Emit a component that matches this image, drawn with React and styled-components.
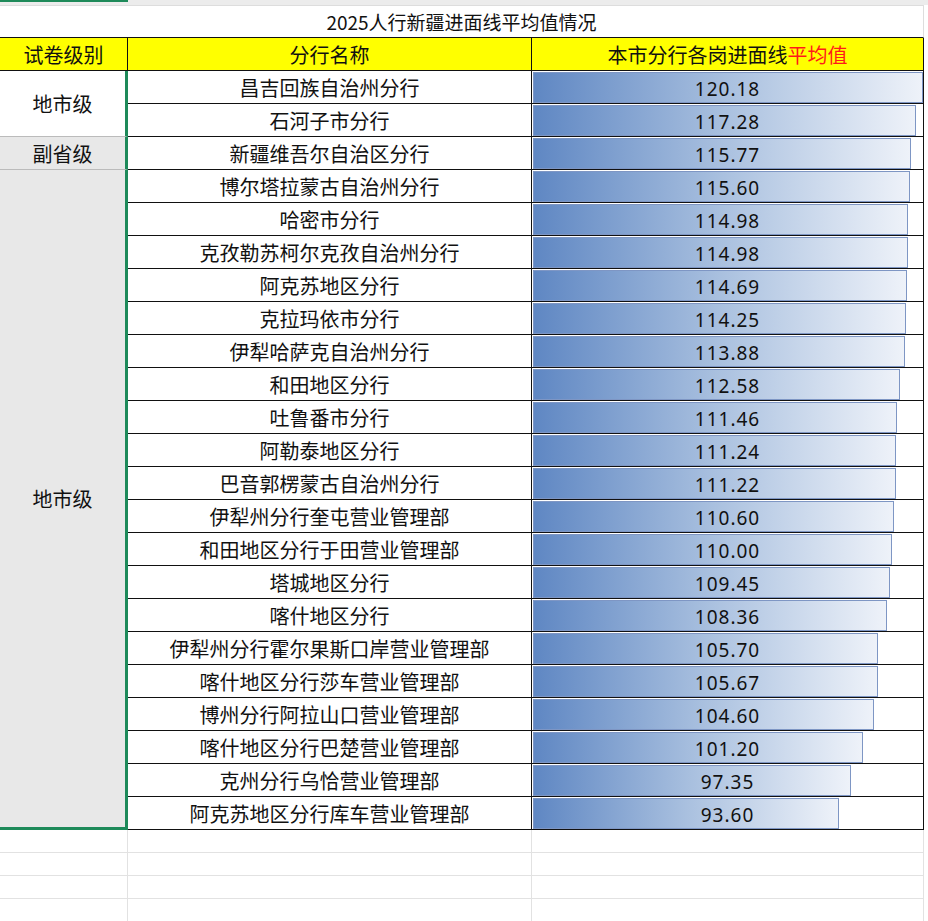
import React from "react";
import styled, { createGlobalStyle } from "styled-components";

const Global = createGlobalStyle`
  body { margin:0; background:#fff; font-family:"Noto Sans CJK SC","Noto Sans",sans-serif; }
`;

const rows = [
  ["昌吉回族自治州分行",120.18],["石河子市分行",117.28],["新疆维吾尔自治区分行",115.77],
  ["博尔塔拉蒙古自治州分行",115.60],["哈密市分行",114.98],["克孜勒苏柯尔克孜自治州分行",114.98],
  ["阿克苏地区分行",114.69],["克拉玛依市分行",114.25],["伊犁哈萨克自治州分行",113.88],
  ["和田地区分行",112.58],["吐鲁番市分行",111.46],["阿勒泰地区分行",111.24],
  ["巴音郭楞蒙古自治州分行",111.22],["伊犁州分行奎屯营业管理部",110.60],["和田地区分行于田营业管理部",110.00],
  ["塔城地区分行",109.45],["喀什地区分行",108.36],["伊犁州分行霍尔果斯口岸营业管理部",105.70],
  ["喀什地区分行莎车营业管理部",105.67],["博州分行阿拉山口营业管理部",104.60],["喀什地区分行巴楚营业管理部",101.20],
  ["克州分行乌恰营业管理部",97.35],["阿克苏地区分行库车营业管理部",93.60],
];

const TopStrip = styled.div`
  height:5px; background:#ececec; position:relative;
  &::before{content:"";position:absolute;left:0;top:0;width:128px;height:2px;background:#1e8a5a;}
`;
const Grid = styled.div`
  display:grid; grid-template-columns:128px 404px 392px; width:924px;
  grid-template-rows:32px 33px repeat(23,33px);
  border-top:1px solid #ddd;
`;
const Title = styled.div`
  grid-column:1 / 4; display:flex; align-items:center; justify-content:center;
  font-size:19px; color:#111; border-bottom:1.5px solid #111; border-right:1px solid #ddd;
`;
const Head = styled.div`
  background:#ffff00; display:flex; align-items:center; justify-content:center;
  font-size:20px; color:#111; border-right:1.5px solid #111; border-bottom:1.5px solid #111;
  ${p=>p.$first?"border-left:none;":""}
  & span{color:#ff1a1a;}
`;
const Level = styled.div`
  grid-column:1; grid-row:${p=>p.$rows};
  background:${p=>p.$gray?"#e8e8e8":"#fff"};
  display:flex; align-items:center; justify-content:center; font-size:20px; color:#111;
  border-right:3px solid #1e8a5a; border-bottom:1px solid #bbb;
  ${p=>p.$last?"border-bottom:3px solid #1e8a5a;":""}
`;
const Name = styled.div`
  grid-column:2; display:flex; align-items:center; justify-content:center;
  font-size:20px; color:#111; border-right:1.5px solid #111; border-bottom:1.5px solid #111;
  white-space:nowrap;
`;
const ValCell = styled.div`
  grid-column:3; display:flex; align-items:center; border-right:1.5px solid #111; border-bottom:1.5px solid #111;
  padding:1px 0 1px 1px; position:relative;
`;
const Bar = styled.div`
  height:29px; border:1px solid #7e96c4;
  background:linear-gradient(90deg,#5f87c3 0%,#a9c0df 50%,#eef2f9 100%);
`;
const Num = styled.div`
  position:absolute; left:0; right:0; top:0; bottom:0; display:flex; align-items:center; justify-content:center;
  font-family:"Noto Sans","Liberation Sans",sans-serif; font-size:19px; color:#111; letter-spacing:1px; padding-top:3px;
`;
const Empty = styled.div`
  display:grid; grid-template-columns:128px 404px 392px; grid-auto-rows:23px;
  & div{border-right:1px solid #e2e2e2; border-bottom:1px solid #e2e2e2;}
`;

export default function App(){
  return (<>
    <Global/>
    <TopStrip/>
    <Grid>
      <Title>2025人行新疆进面线平均值情况</Title>
      <Head>试卷级别</Head>
      <Head>分行名称</Head>
      <Head>本市分行各岗进面线<span>平均值</span></Head>
      <Level $rows="3 / 5">地市级</Level>
      <Level $rows="5 / 6" $gray>副省级</Level>
      <Level $rows="6 / 26" $gray $last>地市级</Level>
      {rows.map(([n,v])=>(
        <React.Fragment key={n}>
          <Name>{n}</Name>
          <ValCell>
            <Bar style={{width: Math.round(v*3.245)+"px"}}/>
            <Num>{v.toFixed(2)}</Num>
          </ValCell>
        </React.Fragment>
      ))}
    </Grid>
    <Empty>{Array.from({length:12}).map((_,i)=><div key={i}/>)}</Empty>
  </>);
}
